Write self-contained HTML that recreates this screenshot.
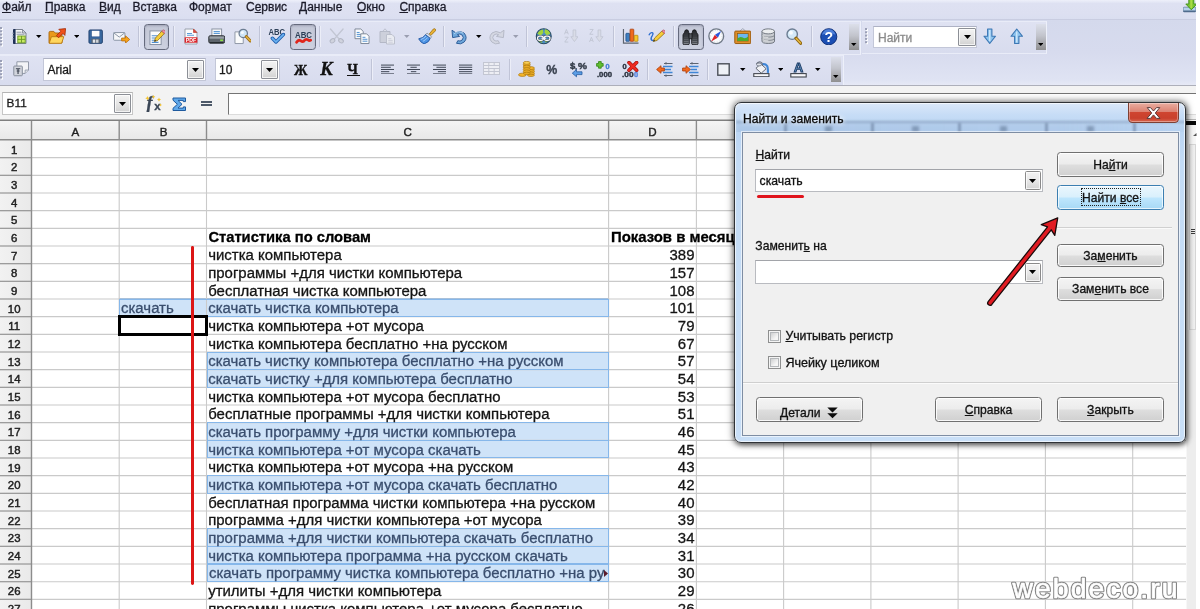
<!DOCTYPE html>
<html lang="ru"><head><meta charset="utf-8"><title>Найти и заменить</title>
<style>
html,body{margin:0;padding:0;background:#fff;}
body{width:1200px;height:609px;overflow:hidden;position:relative;font-family:"Liberation Sans", sans-serif;}
#root{position:absolute;left:0;top:0;width:1200px;height:609px;overflow:hidden;will-change:transform;filter:blur(.55px);}
.a{position:absolute;display:block;}
.t{position:absolute;white-space:nowrap;font-family:"Liberation Sans", sans-serif;-webkit-text-stroke:.3px currentColor;}
u{text-decoration:underline;text-underline-offset:1px;text-decoration-thickness:1px;}
</style></head><body><div id="root">
<div class="a" style="left:0.00px;top:0.00px;width:1196.00px;height:20.00px;background:linear-gradient(#eef0fa,#dee1f2 3.5px,#dde0f1 70%,#dadef0);"></div>
<div class="a" style="left:0.00px;top:20.00px;width:1196.00px;height:65.20px;background:linear-gradient(#d4d9ec,#d7dbee 50%,#dfe3f3 92%,#e6e9f6);"></div>
<div class="a" style="left:0.00px;top:19.30px;width:1196.00px;height:1.10px;background:#c9cde1;"></div>
<div class="a" style="left:0.00px;top:20.60px;width:860.00px;height:32.40px;background:linear-gradient(#dfe2f2,#d8dcee);border-top:1px solid #e9ecf8;border-right:1px solid #edf0fa;border-bottom:1px solid #e9ecf8;"></div>
<div class="a" style="left:861.50px;top:20.60px;width:184.70px;height:31.90px;background:linear-gradient(#dfe2f2,#d8dcee);border-top:1px solid #e9ecf8;border-right:1px solid #edf0fa;border-bottom:1px solid #e9ecf8;"></div>
<div class="a" style="left:0.00px;top:54.60px;width:842.50px;height:29.90px;background:linear-gradient(#dfe2f2,#d8dcee);border-top:1px solid #e9ecf8;border-right:1px solid #edf0fa;border-bottom:1px solid #e9ecf8;"></div>
<div class="a" style="left:0.00px;top:85.00px;width:1196.00px;height:35.00px;background:#f3f3f3;"></div>
<div class="a" style="left:0.00px;top:85.10px;width:1196.00px;height:1.40px;background:#adafba;"></div>
<div class="t" style="top:-0.66px;font-size:12px;line-height:16px;color:#1c1c2a;left:2.00px;"><u>Ф</u>айл</div>
<div class="t" style="top:-0.66px;font-size:12px;line-height:16px;color:#1c1c2a;left:45.00px;"><u>П</u>равка</div>
<div class="t" style="top:-0.66px;font-size:12px;line-height:16px;color:#1c1c2a;left:99.00px;"><u>В</u>ид</div>
<div class="t" style="top:-0.66px;font-size:12px;line-height:16px;color:#1c1c2a;left:132.40px;">Вст<u>а</u>вка</div>
<div class="t" style="top:-0.66px;font-size:12px;line-height:16px;color:#1c1c2a;left:189.00px;">Фо<u>р</u>мат</div>
<div class="t" style="top:-0.66px;font-size:12px;line-height:16px;color:#1c1c2a;left:246.00px;">С<u>е</u>рвис</div>
<div class="t" style="top:-0.66px;font-size:12px;line-height:16px;color:#1c1c2a;left:299.00px;"><u>Д</u>анные</div>
<div class="t" style="top:-0.66px;font-size:12px;line-height:16px;color:#1c1c2a;left:357.00px;"><u>О</u>кно</div>
<div class="t" style="top:-0.66px;font-size:12px;line-height:16px;color:#1c1c2a;left:399.40px;"><u>С</u>правка</div>
<svg class="a" style="left:1183.20px;top:0.00px" width="13.00" height="13.00" viewBox="0 0 13 13"><rect x=".2" y="7.200" width="12.600" height="4.700" rx="1" fill="#b5d2ea" stroke="#5c7896" stroke-width=".7"/><path d="M.4 10.600h12.200v1q0 .5-.5.500h-11.200q-.5 0-.5-.5z" fill="#4f6b8c"/><path d="M5.800-2h5v6h3l-5.500 5.800-5.500-5.800h3z" fill="#7cc62e" stroke="#3f8f18" stroke-width=".9" stroke-linejoin="round"/><path d="M7.300-2h2v9.500l-1 1-1-1z" fill="#b4e04a" opacity=".8"/></svg>
<svg class="a" style="left:0.20px;top:0" width="4" height="100"><rect x="1" y="28.0" width="2" height="2" fill="#fff"/><rect x="0" y="27.0" width="2" height="2" fill="#9ba0b6"/><rect x="1" y="31.3" width="2" height="2" fill="#fff"/><rect x="0" y="30.3" width="2" height="2" fill="#9ba0b6"/><rect x="1" y="34.6" width="2" height="2" fill="#fff"/><rect x="0" y="33.6" width="2" height="2" fill="#9ba0b6"/><rect x="1" y="37.9" width="2" height="2" fill="#fff"/><rect x="0" y="36.9" width="2" height="2" fill="#9ba0b6"/><rect x="1" y="41.2" width="2" height="2" fill="#fff"/><rect x="0" y="40.2" width="2" height="2" fill="#9ba0b6"/><rect x="1" y="44.5" width="2" height="2" fill="#fff"/><rect x="0" y="43.5" width="2" height="2" fill="#9ba0b6"/></svg>
<svg class="a" style="left:12.00px;top:28.00px" width="16.00" height="17.00" viewBox="0 0 16 17"><path d="M2.500 1.500h8l3.500 3.500v10.500h-11.500z" fill="#f6f7f9" stroke="#7a8290" stroke-width="1"/><path d="M10.500 1.500v3.500h3.500z" fill="#d5d8de" stroke="#7a8290" stroke-width=".8"/><rect x="1" y="1" width="2.600" height="15" rx=".8" fill="#1f3157"/><path d="M4.500 4.200h5M4.500 6.200h8" stroke="#8d96a4" stroke-width="1"/><rect x="5.800" y="8" width="7.400" height="6.800" fill="#c6e860" stroke="#6a9a22" stroke-width=".9"/><path d="M9.500 8v6.800M5.800 11.400h7.400" stroke="#6a9a22" stroke-width=".9"/><path d="M0 5.200h2M0 8h2M0 10.800h2" stroke="#9aa3b5" stroke-width=".8"/></svg>
<svg class="a" style="left:36.05px;top:35.00px" width="5.5" height="3" viewBox="0 0 5.5 3"><path d="M0 0H5.5L2.75 3Z" fill="#000"/></svg>
<svg class="a" style="left:48.00px;top:27.50px" width="18.00" height="17.00" viewBox="0 0 18 17"><path d="M1 4.600q0-1.200 1.200-1.200h3.600l1.400 1.600h5.800q1 0 1 1v8.900h-13z" fill="#e99a1c" stroke="#a8640c" stroke-width=".9"/><path d="M1.200 15.300l2.200-6.600h12.400l-2.200 6.600z" fill="#ffd65e" stroke="#b9780f" stroke-width=".9"/><path d="M17.600.600l-.7 6.800-2-2-4.300 4.400-2.200-2.200 4.400-4.300-2-2z" fill="#f0501a" stroke="#a02c08" stroke-width=".8" stroke-linejoin="round"/></svg>
<svg class="a" style="left:73.75px;top:35.00px" width="5.5" height="3" viewBox="0 0 5.5 3"><path d="M0 0H5.5L2.75 3Z" fill="#000"/></svg>
<svg class="a" style="left:88.00px;top:28.80px" width="15.30" height="15.30" viewBox="0 0 16 16"><path d="M1 2.2q0-1.2 1.2-1.2h11.6q1.2 0 1.2 1.2v11.6q0 1.2-1.2 1.2h-11.6q-1.200 0-1.200-1.2z" fill="#3a6aa2" stroke="#1f3f6c" stroke-width="1"/><rect x="3.6" y="1.6" width="8.8" height="6.6" fill="#fdfdfd" stroke="#27508a" stroke-width=".6"/><rect x="3.6" y="10.2" width="8.8" height="4.6" fill="#5a6472"/><rect x="5" y="11" width="2.6" height="3.400" fill="#e3e6ea"/><rect x="8.4" y="11" width="2.600" height="3.400" fill="#cfd3d9"/></svg>
<svg class="a" style="left:113.00px;top:31.60px" width="17.30" height="11.53" viewBox="0 0 18 12"><rect x=".6" y=".6" width="11.800" height="8" rx=".8" fill="#f6f7f9" stroke="#8792a3" stroke-width="1"/><path d="M.8.900l5.700 4.400 5.700-4.400" fill="none" stroke="#8792a3" stroke-width="1"/><path d="M9 6.300h4v-2.300l4.400 3.800-4.400 3.800v-2.300h-4z" fill="#f7a41d" stroke="#b76a08" stroke-width=".8"/></svg>
<div class="a" style="left:137.50px;top:26.00px;width:1.00px;height:21.00px;background:#c0c4d7;"></div>
<div class="a" style="left:138.50px;top:26.00px;width:1.00px;height:21.00px;background:#eceef8;"></div>
<div class="a" style="left:143.70px;top:24.00px;width:25.60px;height:25.80px;box-sizing:border-box;border:1.7px solid #656a7d;border-radius:3.5px;background:linear-gradient(#c3c7d6,#cdd1e0);box-shadow:inset 0 1px 2px rgba(60,60,90,.25);"></div>
<svg class="a" style="left:148.50px;top:28.50px" width="16.50" height="16.50" viewBox="0 0 17 17"><rect x="1" y="2" width="11.500" height="14" fill="#fafbfd" stroke="#8690a2" stroke-width="1"/><path d="M2.800 7h6M2.800 9.300h5M2.800 11.600h4M2.800 13.800h7" stroke="#4f8fd0" stroke-width="1.100"/><path d="M5.600 12.800l1-3.400 6.600-7.200 2.600 2.400-6.800 7.200z" fill="#f6cd3a" stroke="#8c6a12" stroke-width=".8"/><path d="M13.200 2.200l1-1q.8-.6 1.600.1l1 1q.6.800 0 1.400l-1 1z" fill="#ef8fa0" stroke="#b04a5e" stroke-width=".7"/><path d="M5.600 12.800l.5-1.700 1.300 1.200z" fill="#222"/></svg>
<div class="a" style="left:172.50px;top:26.00px;width:1.00px;height:21.00px;background:#c0c4d7;"></div>
<div class="a" style="left:173.50px;top:26.00px;width:1.00px;height:21.00px;background:#eceef8;"></div>
<svg class="a" style="left:184.00px;top:28.00px" width="14.00" height="17.00" viewBox="0 0 14 17"><path d="M1 1h8.500l3.500 3.500v11.500h-12z" fill="#fbfbfc" stroke="#9aa1ad" stroke-width="1"/><path d="M9.500 1v3.500h3.500z" fill="#e0483a" stroke="#b23226" stroke-width=".6"/><path d="M3 5.500h5M3 7.300h7" stroke="#5d9ad6" stroke-width="1.100"/><rect x=".6" y="9.300" width="12.800" height="5.400" fill="#d9252c"/><text x="7" y="13.900" font-size="5.200" font-weight="bold" text-anchor="middle" fill="#fff" font-family="Liberation Sans, sans-serif">PDF</text></svg>
<svg class="a" style="left:207.50px;top:28.00px" width="17.50" height="16.53" viewBox="0 0 18 17"><rect x="4" y="1" width="10" height="7.500" fill="#f7f8fa" stroke="#8a93a2" stroke-width="1"/><path d="M5.800 3.600h6.400M5.800 5.600h6.400" stroke="#5d9ad6" stroke-width="1.200"/><rect x=".8" y="8" width="16.400" height="7.500" rx="1.400" fill="#5d646c" stroke="#2e3338" stroke-width="1"/><rect x="1.600" y="8.700" width="14.800" height="2.300" fill="#9aa1a8"/><rect x="12.500" y="11.800" width="3" height="1.700" fill="#8de04a"/><path d="M2 15.200h14" stroke="#23272b" stroke-width="1.400"/></svg>
<svg class="a" style="left:233.70px;top:28.00px" width="17.50" height="16.53" viewBox="0 0 18 17"><path d="M1 4h8.500v12h-8.500z" fill="#fafbfc" stroke="#8e97a5" stroke-width="1"/><circle cx="9.500" cy="5.600" r="4.300" fill="#cfe6f7" stroke="#6c7d92" stroke-width="1.300"/><circle cx="8.600" cy="4.600" r="1.600" fill="#fff" opacity=".8"/><path d="M12.600 8.800l4.200 4.600" stroke="#9a6a12" stroke-width="3" stroke-linecap="round"/><path d="M12.800 9l3.900 4.200" stroke="#e2b23c" stroke-width="1.500" stroke-linecap="round"/></svg>
<div class="a" style="left:258.50px;top:26.00px;width:1.00px;height:21.00px;background:#c0c4d7;"></div>
<div class="a" style="left:259.50px;top:26.00px;width:1.00px;height:21.00px;background:#eceef8;"></div>
<svg class="a" style="left:268.00px;top:27.50px" width="17.50" height="16.53" viewBox="0 0 18 17"><text x="9" y="7" font-size="8.800" font-weight="bold" text-anchor="middle" fill="#2c3f57" font-family="Liberation Sans, sans-serif" textLength="17" lengthAdjust="spacingAndGlyphs">ABC</text><path d="M4.500 10.600l3.700 3.800 7.600-7.600" fill="none" stroke="#1f5fae" stroke-width="3.600" stroke-linecap="round" stroke-linejoin="round"/><path d="M4.500 10.600l3.700 3.800 7.600-7.600" fill="none" stroke="#6db3f2" stroke-width="1.800" stroke-linecap="round" stroke-linejoin="round"/></svg>
<div class="a" style="left:290.00px;top:24.00px;width:26.00px;height:25.80px;box-sizing:border-box;border:1.7px solid #656a7d;border-radius:3.5px;background:linear-gradient(#c3c7d6,#cdd1e0);box-shadow:inset 0 1px 2px rgba(60,60,90,.25);"></div>
<svg class="a" style="left:294.50px;top:28.50px" width="17.00" height="16.00" viewBox="0 0 17 16"><text x="8.500" y="8.600" font-size="9" font-weight="bold" text-anchor="middle" fill="#2c3f57" font-family="Liberation Sans, sans-serif" textLength="17" lengthAdjust="spacingAndGlyphs">ABC</text><path d="M1.600 13.200q1.800-2.800 3.800-1.600 3 2.200 3.800 0 1.600-2 3.600-.8 1.600 1.400 2.800.4" fill="none" stroke="#e0261c" stroke-width="2.800" stroke-linecap="round"/></svg>
<div class="a" style="left:319.20px;top:26.00px;width:1.00px;height:21.00px;background:#c0c4d7;"></div>
<div class="a" style="left:320.20px;top:26.00px;width:1.00px;height:21.00px;background:#eceef8;"></div>
<svg class="a" style="left:327.50px;top:28.00px" width="17.50" height="16.53" viewBox="0 0 18 17"><path d="M2.500 1l9.500 11M15.500 1l-9.500 11" stroke="#c2c6d3" stroke-width="1.400" stroke-linecap="round"/><ellipse cx="4.600" cy="13.200" rx="2.600" ry="2" fill="#d0d3de" stroke="#b3b7c5" stroke-width="1" transform="rotate(-35 4.600 13.200)"/><ellipse cx="13.400" cy="13.200" rx="2.600" ry="2" fill="#d0d3de" stroke="#b3b7c5" stroke-width="1" transform="rotate(35 13.400 13.200)"/></svg>
<svg class="a" style="left:354.00px;top:28.00px" width="16.50" height="16.50" viewBox="0 0 17 17"><path d="M1 1h6l2.500 2.500v7.500h-8.500z" fill="#fbfcfd" stroke="#7d8797" stroke-width="1"/><path d="M2.800 4.600h3M2.800 6.600h5M2.800 8.600h5" stroke="#4f8fd0" stroke-width="1"/><path d="M7 6h6l2.500 2.500v7.500h-8.500z" fill="#fbfcfd" stroke="#7d8797" stroke-width="1"/><path d="M8.800 9.600h3M8.800 11.600h5M8.800 13.600h5" stroke="#4f8fd0" stroke-width="1"/></svg>
<svg class="a" style="left:379.00px;top:28.00px" width="17.00" height="17.00" viewBox="0 0 17 17"><path d="M1 3.500h10v11h-10z" fill="#cdd0db" stroke="#b4b8c6" stroke-width="1"/><path d="M3.500 3.500l2.500-2.700 2.500 2.700z" fill="#dcdfe8" stroke="#b4b8c6" stroke-width=".8"/><path d="M7.500 6.500h5.500l2.500 2.500v7h-8z" fill="#e9ebf1" stroke="#bcc0cc" stroke-width="1"/><path d="M9.300 10.600h3M9.300 12.400h4.400M9.300 14.200h4.400" stroke="#c9ccd8" stroke-width=".9"/></svg>
<svg class="a" style="left:404.25px;top:35.00px" width="5.5" height="3" viewBox="0 0 5.5 3"><path d="M0 0H5.5L2.75 3Z" fill="#9a9eb0"/></svg>
<svg class="a" style="left:417.50px;top:27.50px" width="18.50" height="16.55" viewBox="0 0 19 17"><path d="M11.500 6.200l4.300-5.200q1.200-.8 2 .2t0 1.800l-4.600 4.700z" fill="#e9b234" stroke="#9a6d10" stroke-width=".8"/><path d="M9.300 5.200l4.700 3.800-1.500 1.700-4.700-3.800z" fill="#dfe3ea" stroke="#7c8696" stroke-width=".8"/><path d="M7.800 6.900l4.700 3.800q-.8 3.800-6.300 5.700-3.800-1.700-5.500-5.300 4.600-.6 7.100-4.200z" fill="#4d93e3" stroke="#1e55a4" stroke-width=".9"/><path d="M3 11.800q3-1 5.300-3.600M5 13.700q3-1.400 5-4" stroke="#a8d0fa" stroke-width=".9" fill="none"/></svg>
<div class="a" style="left:442.50px;top:26.00px;width:1.00px;height:21.00px;background:#c0c4d7;"></div>
<div class="a" style="left:443.50px;top:26.00px;width:1.00px;height:21.00px;background:#eceef8;"></div>
<svg class="a" style="left:451.00px;top:28.50px" width="17.00" height="16.00" viewBox="0 0 17 16"><path d="M1 1.200l.6 7.400 7-1.200-2.300-1.700q2.600-1.600 4.800.3 2.400 2.500 0 5.100-1.900 1.600-4.300.6l-1.300 2.600q4.300 1.700 7.700-1.300 3.900-4.400-.2-9-3.800-3-8.300-.2z" fill="#6fa8dc" stroke="#2f5f9a" stroke-width="1" stroke-linejoin="round"/><path d="M3.200 4.700q4.600-3.600 9.200-.4" stroke="#b9dbf7" stroke-width="1" fill="none"/></svg>
<svg class="a" style="left:476.05px;top:35.00px" width="5.5" height="3" viewBox="0 0 5.5 3"><path d="M0 0H5.5L2.75 3Z" fill="#000"/></svg>
<svg class="a" style="left:488.00px;top:28.50px" width="17.00" height="16.00" viewBox="0 0 17 16"><g transform="translate(17 0) scale(-1 1)"><path d="M1 1.200l.6 7.400 7-1.200-2.300-1.700q2.600-1.600 4.800.3 2.400 2.500 0 5.100-1.900 1.600-4.300.6l-1.300 2.600q4.300 1.700 7.700-1.300 3.900-4.400-.2-9-3.800-3-8.300-.2z" fill="#d4d7e2" stroke="#b6bac8" stroke-width="1" stroke-linejoin="round"/></g></svg>
<svg class="a" style="left:513.25px;top:35.00px" width="5.5" height="3" viewBox="0 0 5.5 3"><path d="M0 0H5.5L2.75 3Z" fill="#9a9eb0"/></svg>
<div class="a" style="left:525.50px;top:26.00px;width:1.00px;height:21.00px;background:#c0c4d7;"></div>
<div class="a" style="left:526.50px;top:26.00px;width:1.00px;height:21.00px;background:#eceef8;"></div>
<svg class="a" style="left:535.00px;top:28.00px" width="17.50" height="16.53" viewBox="0 0 18 17"><circle cx="9" cy="8.500" r="7.700" fill="#4a8ec6" stroke="#274a66" stroke-width="1.100"/><path d="M2.400 6q1.800-3.800 5.800-4.400l.4 3.600-2.800 2.400zM10.200 1.400q3.800.6 5.600 4.400l-3.600 1.600-2.400-2.600zM2.600 12.600l3-1.400 2.200 4q-3.400-.4-5.200-2.600zM10.600 12l4.600-.6q-1.400 3-4.600 3.800z" fill="#a2d43c"/><rect x="2.600" y="8.300" width="6" height="4.400" rx="2.200" fill="none" stroke="#3c4652" stroke-width="2.300"/><rect x="9.400" y="8.300" width="6" height="4.400" rx="2.200" fill="none" stroke="#3c4652" stroke-width="2.300"/><path d="M6.500 10.500h5" stroke="#3c4652" stroke-width="2.300"/><rect x="2.600" y="8.300" width="6" height="4.400" rx="2.200" fill="none" stroke="#f6f8fa" stroke-width="1.300"/><rect x="9.400" y="8.300" width="6" height="4.400" rx="2.200" fill="none" stroke="#f6f8fa" stroke-width="1.300"/><path d="M6.500 10.500h5" stroke="#f6f8fa" stroke-width="1.300"/></svg>
<svg class="a" style="left:562.50px;top:28.00px" width="15.50" height="16.47" viewBox="0 0 16 17"><path d="M10.400 2h2.800v7h2.300l-3.700 5-3.700-5h2.300z" fill="#d9dce7" stroke="#c0c4d2" stroke-width=".8"/><path d="M1.500 6.500l2-5 2 5M2.300 4.800h2.400" fill="none" stroke="#c0c4d2" stroke-width=".9"/><path d="M1.800 9.500h3.600l-3.600 5h3.600" fill="none" stroke="#c0c4d2" stroke-width=".9"/></svg>
<svg class="a" style="left:588.00px;top:28.00px" width="15.50" height="16.47" viewBox="0 0 16 17"><path d="M10.400 2h2.800v7h2.300l-3.700 5-3.700-5h2.300z" fill="#d9dce7" stroke="#c0c4d2" stroke-width=".8"/><path d="M1.800 1.500h3.600l-3.600 5h3.600" fill="none" stroke="#c0c4d2" stroke-width=".9"/><path d="M1.500 14.500l2-5 2 5M2.300 12.800h2.400" fill="none" stroke="#c0c4d2" stroke-width=".9"/></svg>
<div class="a" style="left:612.50px;top:26.00px;width:1.00px;height:21.00px;background:#c0c4d7;"></div>
<div class="a" style="left:613.50px;top:26.00px;width:1.00px;height:21.00px;background:#eceef8;"></div>
<svg class="a" style="left:621.70px;top:27.50px" width="17.50" height="16.53" viewBox="0 0 18 17"><path d="M1.500 1v14.500h15.500" fill="none" stroke="#5e6570" stroke-width="1.200"/><rect x="4" y="5.500" width="3.800" height="8.200" rx=".6" fill="#3f7fc0" stroke="#1f4f86" stroke-width=".8"/><rect x="8.300" y="1.200" width="3.800" height="12.500" rx=".6" fill="#f06a1e" stroke="#a83c0a" stroke-width=".8"/><rect x="12.600" y="7.500" width="3.800" height="6.200" rx=".6" fill="#f7c62c" stroke="#b3860c" stroke-width=".8"/></svg>
<svg class="a" style="left:647.50px;top:29.00px" width="17.50" height="14.58" viewBox="0 0 18 15"><path d="M1.200 6q1-2.600 3-2.300 1.800.5.200 3-2.200 3.200-.6 4.800 1.600.9 3-.5" fill="none" stroke="#2f6fd0" stroke-width="1.400" stroke-linecap="round"/><path d="M5.500 12.800l1.300-3.500 7.500-7.200 2.500 2.500-7.600 7.200z" fill="#f6cd3a" stroke="#8c6a12" stroke-width=".8"/><path d="M14.300 2.100l1-.9q.9-.5 1.600.2l.8.900q.5.800-.1 1.500l-.9.900z" fill="#ef8fa0" stroke="#b04a5e" stroke-width=".7"/><path d="M5.500 12.800l.6-1.700 1.200 1.200z" fill="#222"/></svg>
<div class="a" style="left:672.50px;top:26.00px;width:1.00px;height:21.00px;background:#c0c4d7;"></div>
<div class="a" style="left:673.50px;top:26.00px;width:1.00px;height:21.00px;background:#eceef8;"></div>
<div class="a" style="left:678.00px;top:24.00px;width:25.70px;height:25.80px;box-sizing:border-box;border:1.7px solid #656a7d;border-radius:3.5px;background:linear-gradient(#c3c7d6,#cdd1e0);box-shadow:inset 0 1px 2px rgba(60,60,90,.25);"></div>
<svg class="a" style="left:682.30px;top:28.50px" width="17.00" height="16.00" viewBox="0 0 17 16"><defs><linearGradient id="bn" x1="0" y1="0" x2="0" y2="1"><stop offset="0" stop-color="#26282c"/><stop offset=".45" stop-color="#3a3d42"/><stop offset="1" stop-color="#8a8e94"/></linearGradient></defs><path d="M2.600 3.200q0-2.400 2-2.400t2 2.400l.7 1.600v9.700q0 1.200-1.200 1.200h-3.900q-1.200 0-1.200-1.200v-8.700z" fill="url(#bn)" stroke="#17191c" stroke-width=".9"/><path d="M14.400 3.200q0-2.400-2-2.400t-2 2.400l-.7 1.600v9.700q0 1.200 1.200 1.200h3.900q1.200 0 1.200-1.200v-8.700z" fill="url(#bn)" stroke="#17191c" stroke-width=".9"/><rect x="7" y="4.800" width="3" height="5" fill="#55595f" stroke="#17191c" stroke-width=".8"/><path d="M1.600 9.500h5M1.600 11.500h5M1.600 13.500h5M10.400 9.500h5M10.400 11.500h5M10.400 13.500h5" stroke="#3a3d42" stroke-width=".7"/></svg>
<svg class="a" style="left:708.00px;top:28.00px" width="16.50" height="16.50" viewBox="0 0 17 17"><circle cx="8.500" cy="8.500" r="7.600" fill="#fafbfc" stroke="#6f7987" stroke-width="1.400"/><circle cx="8.500" cy="8.500" r="6" fill="none" stroke="#c3c9d2" stroke-width=".8" stroke-dasharray="1 1.600"/><path d="M13.600 3.200l-3.400 6.800-3-3z" fill="#2b56d8"/><path d="M3.200 13.800l3.800-6.800 3 3z" fill="#e0242a"/></svg>
<svg class="a" style="left:733.70px;top:28.00px" width="17.50" height="16.53" viewBox="0 0 18 17"><path d="M6 3.200l3-2.600 3 2.600" fill="none" stroke="#9aa0ab" stroke-width=".9"/><rect x=".8" y="3.200" width="16.400" height="12.800" rx=".8" fill="#e0902a" stroke="#9a5a0c" stroke-width="1"/><rect x="3.400" y="5.800" width="11.200" height="7.600" fill="#6ab8f0" stroke="#8c560c" stroke-width=".7"/><path d="M3.400 13.400v-2.500q3-2.600 5.600-1t5.600-1.200v4.700z" fill="#4eaa2c"/></svg>
<svg class="a" style="left:761.00px;top:28.00px" width="14.50" height="16.43" viewBox="0 0 15 17"><path d="M1 3.500v10q0 2.500 6.500 2.500t6.500-2.500v-10z" fill="#c9ccd1" stroke="#6f757e" stroke-width="1"/><ellipse cx="7.500" cy="3.500" rx="6.500" ry="2.600" fill="#eceef0" stroke="#6f757e" stroke-width="1"/><path d="M1 7q0 2.400 6.500 2.400t6.500-2.400M1 10.400q0 2.400 6.500 2.400t6.500-2.400" fill="none" stroke="#7a8088" stroke-width=".9"/><path d="M1.600 7.600q0 2.200 5.900 2.200M1.600 11q0 2.200 5.900 2.200" fill="none" stroke="#f3f4f5" stroke-width=".7"/></svg>
<svg class="a" style="left:786.00px;top:28.00px" width="16.00" height="17.00" viewBox="0 0 16 17"><circle cx="6.200" cy="6.200" r="5.200" fill="#d4e9f8" stroke="#6c7d92" stroke-width="1.400"/><circle cx="5" cy="4.800" r="2" fill="#fff" opacity=".8"/><path d="M10 10.200l4.600 5" stroke="#8d6410" stroke-width="3.200" stroke-linecap="round"/><path d="M10.300 10.500l4.200 4.500" stroke="#e6b83e" stroke-width="1.600" stroke-linecap="round"/></svg>
<div class="a" style="left:810.50px;top:26.00px;width:1.00px;height:21.00px;background:#c0c4d7;"></div>
<div class="a" style="left:811.50px;top:26.00px;width:1.00px;height:21.00px;background:#eceef8;"></div>
<svg class="a" style="left:820.00px;top:27.50px" width="17.50" height="17.50" viewBox="0 0 18 18"><circle cx="9" cy="9" r="8.300" fill="#1c4fb4" stroke="#0f2f78" stroke-width="1"/><path d="M2 7q2-5.600 7-5.600t7 5.600q-7-2.600-14 0z" fill="#5f8fe6" opacity=".75"/><text x="9" y="14.200" font-size="14.500" font-weight="bold" text-anchor="middle" fill="#fff" font-family="Liberation Sans, sans-serif">?</text></svg>
<div class="a" style="left:848.70px;top:24.20px;width:10.30px;height:25.80px;background:linear-gradient(#dcdfea,#c2c4cc 45%,#8f8f90);"></div>
<svg class="a" style="left:851.10px;top:43.00px" width="5.5" height="3" viewBox="0 0 5.5 3"><path d="M0 0H5.5L2.75 3Z" fill="#000"/></svg>
<svg class="a" style="left:865.00px;top:0" width="4" height="100"><rect x="1" y="29.0" width="2" height="2" fill="#fff"/><rect x="0" y="28.0" width="2" height="2" fill="#9ba0b6"/><rect x="1" y="32.3" width="2" height="2" fill="#fff"/><rect x="0" y="31.3" width="2" height="2" fill="#9ba0b6"/><rect x="1" y="35.6" width="2" height="2" fill="#fff"/><rect x="0" y="34.6" width="2" height="2" fill="#9ba0b6"/><rect x="1" y="38.9" width="2" height="2" fill="#fff"/><rect x="0" y="37.9" width="2" height="2" fill="#9ba0b6"/><rect x="1" y="42.2" width="2" height="2" fill="#fff"/><rect x="0" y="41.2" width="2" height="2" fill="#9ba0b6"/></svg>
<div class="a" style="left:873.30px;top:25.60px;width:104.20px;height:22.70px;box-sizing:border-box;background:#fff;border:1px solid #c3c7d8;border-top-color:#aeb2c4;"></div>
<div class="a" style="left:958.10px;top:27.60px;width:17.90px;height:18.70px;box-sizing:border-box;border:1px solid #8c8f96;border-radius:1px;background:linear-gradient(#f3f3f3,#e6e6e6 50%,#d2d2d2);box-shadow:inset 0 0 0 1px rgba(255,255,255,.7);"></div>
<svg class="a" style="left:963.55px;top:35.25px" width="7" height="4" viewBox="0 0 7 4"><path d="M0 0H7L3.5 4Z" fill="#000"/></svg>
<div class="t" style="top:29.54px;font-size:12px;line-height:16px;color:#8b8b8b;left:878.00px;">Найти</div>
<svg class="a" style="left:983.00px;top:27.50px" width="13.50" height="16.50" viewBox="0 0 13.5 16.5"><path d="M4.600 1h4.300v7.200h3.600l-5.750 7.300-5.750-7.300h3.600z" fill="#8ec4ee" stroke="#3d78b4" stroke-width="1.100" stroke-linejoin="round"/><path d="M6.750 2v11" stroke="#d5ebfb" stroke-width="1.200"/></svg>
<svg class="a" style="left:1009.50px;top:27.50px" width="13.50" height="16.50" viewBox="0 0 13.5 16.5"><g transform="translate(0 16.500) scale(1 -1)"><path d="M4.600 1h4.300v7.200h3.600l-5.750 7.300-5.750-7.300h3.600z" fill="#8ec4ee" stroke="#3d78b4" stroke-width="1.100" stroke-linejoin="round"/><path d="M6.750 2v11" stroke="#d5ebfb" stroke-width="1.200"/></g></svg>
<div class="a" style="left:1035.50px;top:24.20px;width:10.00px;height:25.80px;background:linear-gradient(#dcdfea,#c2c4cc 45%,#8f8f90);"></div>
<svg class="a" style="left:1037.75px;top:43.00px" width="5.5" height="3" viewBox="0 0 5.5 3"><path d="M0 0H5.5L2.75 3Z" fill="#000"/></svg>
<svg class="a" style="left:0.20px;top:0" width="4" height="100"><rect x="1" y="61.0" width="2" height="2" fill="#fff"/><rect x="0" y="60.0" width="2" height="2" fill="#9ba0b6"/><rect x="1" y="64.3" width="2" height="2" fill="#fff"/><rect x="0" y="63.3" width="2" height="2" fill="#9ba0b6"/><rect x="1" y="67.6" width="2" height="2" fill="#fff"/><rect x="0" y="66.6" width="2" height="2" fill="#9ba0b6"/><rect x="1" y="70.9" width="2" height="2" fill="#fff"/><rect x="0" y="69.9" width="2" height="2" fill="#9ba0b6"/><rect x="1" y="74.2" width="2" height="2" fill="#fff"/><rect x="0" y="73.2" width="2" height="2" fill="#9ba0b6"/><rect x="1" y="77.5" width="2" height="2" fill="#fff"/><rect x="0" y="76.5" width="2" height="2" fill="#9ba0b6"/></svg>
<svg class="a" style="left:12.50px;top:61.00px" width="16.50" height="15.53" viewBox="0 0 17 16"><path d="M4 .800h12v8.500l-3.500 3.500h-8.500z" fill="#f3f4f7" stroke="#9097a6" stroke-width="1"/><path d="M16 9.300h-3.500v3.500" fill="#dcdfe6" stroke="#9097a6" stroke-width=".8"/><rect x=".8" y="5.200" width="8.800" height="10" rx=".8" fill="#d1d4dc" stroke="#858c9a" stroke-width="1"/><path d="M3 8h4.500M5.200 8v5.500M3.800 10.300h3" stroke="#3c4350" stroke-width="1.200" fill="none"/></svg>
<div class="a" style="left:43.00px;top:58.00px;width:163.00px;height:23.30px;box-sizing:border-box;background:#fff;border:1px solid #c3c7d8;border-top-color:#aeb2c4;"></div>
<div class="a" style="left:187.30px;top:60.00px;width:17.20px;height:19.30px;box-sizing:border-box;border:1px solid #8c8f96;border-radius:1px;background:linear-gradient(#f3f3f3,#e6e6e6 50%,#d2d2d2);box-shadow:inset 0 0 0 1px rgba(255,255,255,.7);"></div>
<svg class="a" style="left:192.40px;top:67.95px" width="7" height="4" viewBox="0 0 7 4"><path d="M0 0H7L3.5 4Z" fill="#000"/></svg>
<div class="t" style="top:61.54px;font-size:12px;line-height:16px;color:#1a1a1a;left:47.50px;">Arial</div>
<div class="a" style="left:215.00px;top:58.00px;width:65.00px;height:23.30px;box-sizing:border-box;background:#fff;border:1px solid #c3c7d8;border-top-color:#aeb2c4;"></div>
<div class="a" style="left:261.30px;top:60.00px;width:17.20px;height:19.30px;box-sizing:border-box;border:1px solid #8c8f96;border-radius:1px;background:linear-gradient(#f3f3f3,#e6e6e6 50%,#d2d2d2);box-shadow:inset 0 0 0 1px rgba(255,255,255,.7);"></div>
<svg class="a" style="left:266.40px;top:67.95px" width="7" height="4" viewBox="0 0 7 4"><path d="M0 0H7L3.5 4Z" fill="#000"/></svg>
<div class="t" style="top:61.54px;font-size:12px;line-height:16px;color:#1a1a1a;left:219.00px;">10</div>
<div class="t" style="left:294.3px;top:60.6px;font:bold 14.6px 'Liberation Serif',serif;line-height:18px;color:#111;transform-origin:0 0;transform:scaleX(.93)">Ж</div>
<div class="t" style="left:320.3px;top:58.6px;font:italic bold 18.5px 'Liberation Serif',serif;line-height:21px;color:#111">К</div>
<div class="t" style="left:347.3px;top:59.8px;font:bold 14.6px 'Liberation Serif',serif;line-height:18px;color:#111;">Ч</div>
<div class="a" style="left:346.80px;top:74.60px;width:13.00px;height:1.30px;background:#111;"></div>
<div class="a" style="left:370.50px;top:59.00px;width:1.00px;height:21.00px;background:#c0c4d7;"></div>
<div class="a" style="left:371.50px;top:59.00px;width:1.00px;height:21.00px;background:#eceef8;"></div>
<svg class="a" style="left:381.20px;top:64.20px" width="13.20" height="10.27" viewBox="0 0 13.5 10.5"><rect x="0" y="0.60" width="13.5" height="1" fill="#3c4452"/><rect x="0" y="2.85" width="10" height="1" fill="#3c4452"/><rect x="0" y="5.10" width="13.5" height="1" fill="#3c4452"/><rect x="0" y="7.35" width="8.5" height="1" fill="#3c4452"/><rect x="0" y="9.60" width="13.5" height="1" fill="#3c4452"/></svg>
<svg class="a" style="left:407.20px;top:64.20px" width="13.20" height="10.27" viewBox="0 0 13.5 10.5"><rect x="0" y="0.60" width="13.5" height="1" fill="#3c4452"/><rect x="3.5" y="2.85" width="6.5" height="1" fill="#3c4452"/><rect x="0" y="5.10" width="13.5" height="1" fill="#3c4452"/><rect x="4" y="7.35" width="5.5" height="1" fill="#3c4452"/><rect x="0" y="9.60" width="13.5" height="1" fill="#3c4452"/></svg>
<svg class="a" style="left:433.30px;top:64.20px" width="13.20" height="10.27" viewBox="0 0 13.5 10.5"><rect x="0" y="0.60" width="13.5" height="1" fill="#3c4452"/><rect x="3.5" y="2.85" width="10.0" height="1" fill="#3c4452"/><rect x="0" y="5.10" width="13.5" height="1" fill="#3c4452"/><rect x="5" y="7.35" width="8.5" height="1" fill="#3c4452"/><rect x="0" y="9.60" width="13.5" height="1" fill="#3c4452"/></svg>
<svg class="a" style="left:459.40px;top:64.20px" width="13.20" height="10.27" viewBox="0 0 13.5 10.5"><rect x="0" y="0.60" width="13.5" height="1" fill="#3c4452"/><rect x="0" y="2.85" width="13.5" height="1" fill="#3c4452"/><rect x="0" y="5.10" width="13.5" height="1" fill="#3c4452"/><rect x="0" y="7.35" width="13.5" height="1" fill="#3c4452"/><rect x="0" y="9.60" width="13.5" height="1" fill="#3c4452"/></svg>
<svg class="a" style="left:483.00px;top:62.00px" width="17.00" height="13.00" viewBox="0 0 17 13"><rect x=".5" y=".5" width="16" height="12" fill="#edeef4" stroke="#c3c6d2" stroke-width="1"/><path d="M.5 3.500h16M.5 6.500h16M.5 9.500h16M5.800.5v12M11.200.5v12" stroke="#c3c6d2" stroke-width="1"/><rect x="6.300" y="4" width="9.700" height="2" fill="#edeef4"/></svg>
<div class="a" style="left:508.50px;top:59.00px;width:1.00px;height:21.00px;background:#c0c4d7;"></div>
<div class="a" style="left:509.50px;top:59.00px;width:1.00px;height:21.00px;background:#eceef8;"></div>
<svg class="a" style="left:517.50px;top:60.50px" width="17.50" height="16.53" viewBox="0 0 18 17"><g stroke="#a8740c" stroke-width=".7" fill="#f5b52a"><ellipse cx="4.500" cy="14.200" rx="4" ry="1.700"/><ellipse cx="13.300" cy="14.500" rx="3.600" ry="1.500"/><ellipse cx="13.300" cy="12.700" rx="3.600" ry="1.500"/><ellipse cx="13.300" cy="10.900" rx="3.600" ry="1.500"/><ellipse cx="13.300" cy="9.100" rx="3.600" ry="1.500"/><ellipse cx="13.300" cy="7.300" rx="3.600" ry="1.500"/><ellipse cx="9" cy="12.400" rx="3.600" ry="1.500"/><ellipse cx="9" cy="10.600" rx="3.600" ry="1.500"/><ellipse cx="9" cy="8.800" rx="3.600" ry="1.500"/><ellipse cx="9" cy="7" rx="3.600" ry="1.500"/><ellipse cx="9" cy="5.200" rx="3.600" ry="1.500"/><ellipse cx="9" cy="3.400" rx="3.600" ry="1.500"/><ellipse cx="9" cy="1.900" rx="3.600" ry="1.500" fill="#fbd157"/></g></svg>
<svg class="a" style="left:546.00px;top:63.60px" width="11.50" height="11.50" viewBox="0 0 12 12"><text x="6" y="10.400" font-size="12.600" font-weight="bold" text-anchor="middle" fill="#3a4250" stroke="#3a4250" stroke-width=".35" font-family="Liberation Sans, sans-serif" textLength="11.500" lengthAdjust="spacingAndGlyphs">%</text></svg>
<svg class="a" style="left:569.70px;top:60.50px" width="17.00" height="17.00" viewBox="0 0 17 17"><g stroke="#2f3744" stroke-width=".4"><text x="0" y="8" font-size="9.500" font-weight="bold" fill="#2f3744" font-family="Liberation Sans, sans-serif">$</text><text x="5.200" y="8" font-size="6" font-weight="bold" fill="#2f3744" font-family="Liberation Sans, sans-serif">,</text><text x="8" y="8" font-size="9.500" font-weight="bold" fill="#2f3744" font-family="Liberation Sans, sans-serif" textLength="9" lengthAdjust="spacingAndGlyphs">%</text></g><path d="M2.300 12.200l4.200-3.600v2.200h5.500v2.800h-5.500v2.200z" fill="#5b9ee6" stroke="#245a9e" stroke-width=".8" stroke-linejoin="round"/></svg>
<svg class="a" style="left:596.00px;top:61.00px" width="16.50" height="16.50" viewBox="0 0 17 17"><path d="M2.600.600h2.800v2h2v2.800h-2v2h-2.800v-2h-2v-2.800h2z" fill="#62c030" stroke="#2f7f12" stroke-width=".8"/><text x="9.800" y="8.200" font-size="7.500" font-weight="bold" fill="#4a7fd8" stroke="#4a7fd8" stroke-width=".4" font-family="Liberation Sans, sans-serif">0</text><text x="1" y="16" font-size="7.500" font-weight="bold" fill="#2f3744" stroke="#2f3744" stroke-width=".4" font-family="Liberation Sans, sans-serif" textLength="15.500" lengthAdjust="spacingAndGlyphs">.000</text></svg>
<svg class="a" style="left:622.00px;top:61.00px" width="17.00" height="17.00" viewBox="0 0 17 17"><g stroke-width=".4"><text x=".500" y="7.800" font-size="7.500" font-weight="bold" fill="#2f3744" stroke="#2f3744" font-family="Liberation Sans, sans-serif">0</text><text x="0" y="16" font-size="7.500" font-weight="bold" fill="#2f3744" stroke="#2f3744" font-family="Liberation Sans, sans-serif" textLength="11.500" lengthAdjust="spacingAndGlyphs">.00</text><text x="12" y="16" font-size="7.500" font-weight="bold" fill="#5a86dc" stroke="#5a86dc" font-family="Liberation Sans, sans-serif">0</text></g><path d="M7 1.600l7.600 7.600M14.600 1.600l-7.600 7.600" stroke="#a3120e" stroke-width="3.600" stroke-linecap="round"/><path d="M7 1.600l7.600 7.600M14.600 1.600l-7.600 7.600" stroke="#ee2a22" stroke-width="2.300" stroke-linecap="round"/></svg>
<div class="a" style="left:646.50px;top:59.00px;width:1.00px;height:21.00px;background:#c0c4d7;"></div>
<div class="a" style="left:647.50px;top:59.00px;width:1.00px;height:21.00px;background:#eceef8;"></div>
<svg class="a" style="left:656.00px;top:62.00px" width="17.00" height="15.00" viewBox="0 0 17 15"><path d="M8 1.500h8.500M8 13.500h8.500" stroke="#5d6572" stroke-width="1.100"/><path d="M7 4.500h9.500M8.500 7.500h6.500M7 10.500h9.500" stroke="#3f86d6" stroke-width="1.500"/><path d="M10 0v2.500M10 12.500v2.500" stroke="#5d6572" stroke-width=".9"/><path d="M.600 7.500l4.400-3.800v2.300h3.400v3h-3.400v2.300z" fill="#f2681c" stroke="#a83c0a" stroke-width=".8" stroke-linejoin="round"/></svg>
<svg class="a" style="left:681.70px;top:62.00px" width="17.00" height="15.00" viewBox="0 0 17 15"><path d="M8 1.500h8.500M8 13.500h8.500" stroke="#5d6572" stroke-width="1.100"/><path d="M7 4.500h9.500M8.500 7.500h6.500M7 10.500h9.500" stroke="#3f86d6" stroke-width="1.500"/><path d="M10 0v2.500M10 12.500v2.500" stroke="#5d6572" stroke-width=".9"/><path d="M8.400 7.500l-4.400-3.800v2.300h-3.400v3h3.400v2.300z" fill="#f2681c" stroke="#a83c0a" stroke-width=".8" stroke-linejoin="round"/></svg>
<div class="a" style="left:707.00px;top:59.00px;width:1.00px;height:21.00px;background:#c0c4d7;"></div>
<div class="a" style="left:708.00px;top:59.00px;width:1.00px;height:21.00px;background:#eceef8;"></div>
<svg class="a" style="left:717.00px;top:63.00px" width="13.00" height="13.00" viewBox="0 0 13 13"><rect x=".800" y=".800" width="11.400" height="11.400" fill="#eef1f6" stroke="#4a4f58" stroke-width="1.400"/></svg>
<svg class="a" style="left:740.25px;top:68.00px" width="5.5" height="3" viewBox="0 0 5.5 3"><path d="M0 0H5.5L2.75 3Z" fill="#000"/></svg>
<svg class="a" style="left:752.50px;top:60.50px" width="17.50" height="16.53" viewBox="0 0 18 17"><path d="M8.500 3.800q3.800-1.600 6 1.200 1.200 2 .8 7.200" fill="none" stroke="#3f86d6" stroke-width="2.200"/><path d="M3 7.500l5-4.500 5.500 5-5 4.500z" fill="#f2f3f6" stroke="#5d6470" stroke-width="1"/><path d="M3.400 3.200q1.600-2.800 4.400-2.200 2.200.8 1.600 3.200" fill="none" stroke="#6b7280" stroke-width="1.100"/><ellipse cx="6.200" cy="3.600" rx="2.600" ry="1.500" fill="#dfe2e8" stroke="#6b7280" stroke-width=".8"/><rect x=".800" y="13" width="15.600" height="3.200" fill="#f7f7fa" stroke="#3f444c" stroke-width="1.100"/></svg>
<svg class="a" style="left:777.55px;top:68.00px" width="5.5" height="3" viewBox="0 0 5.5 3"><path d="M0 0H5.5L2.75 3Z" fill="#000"/></svg>
<svg class="a" style="left:790.00px;top:61.00px" width="17.00" height="17.00" viewBox="0 0 17 17"><text x="8.500" y="10.800" font-size="13.200" font-weight="bold" text-anchor="middle" fill="#6a98c6" stroke="#1f3f68" stroke-width=".9" font-family="Liberation Sans, sans-serif">A</text><rect x=".800" y="12.600" width="15.400" height="3.400" fill="#f7f7fa" stroke="#3f444c" stroke-width="1.100"/></svg>
<svg class="a" style="left:815.25px;top:68.00px" width="5.5" height="3" viewBox="0 0 5.5 3"><path d="M0 0H5.5L2.75 3Z" fill="#000"/></svg>
<div class="a" style="left:831.00px;top:56.60px;width:10.00px;height:25.40px;background:linear-gradient(#dcdfea,#c2c4cc 45%,#8f8f90);"></div>
<svg class="a" style="left:833.25px;top:75.00px" width="5.5" height="3" viewBox="0 0 5.5 3"><path d="M0 0H5.5L2.75 3Z" fill="#000"/></svg>
<div class="a" style="left:2.40px;top:92.40px;width:130.20px;height:22.60px;box-sizing:border-box;background:#fff;border:1px solid #c6c6c6;border-top-color:#b4b4b4;"></div>
<div class="a" style="left:114.10px;top:94.40px;width:17.00px;height:18.60px;box-sizing:border-box;border:1px solid #8c8f96;border-radius:1px;background:linear-gradient(#f3f3f3,#e6e6e6 50%,#d2d2d2);box-shadow:inset 0 0 0 1px rgba(255,255,255,.7);"></div>
<svg class="a" style="left:119.10px;top:102.00px" width="7" height="4" viewBox="0 0 7 4"><path d="M0 0H7L3.5 4Z" fill="#000"/></svg>
<div class="t" style="top:96.41px;font-size:11.8px;line-height:15px;color:#1a1a1a;left:6.60px;">B11</div>
<svg class="a" style="left:145.00px;top:95.00px" width="17.00" height="17.00" viewBox="0 0 17 17"><text x="1.500" y="14" font-size="18" font-style="italic" font-weight="bold" fill="#3a4656" stroke="#3a4656" stroke-width=".3" font-family="Liberation Serif, serif">f</text><text x="9.200" y="15.400" font-size="11.500" font-weight="bold" fill="#3a4656" stroke="#3a4656" stroke-width=".3" font-family="Liberation Sans, sans-serif">x</text><g fill="#f4c430"><path d="M2.500 1l.7 1.500 1.500.7-1.500.7-.7 1.500-.7-1.500-1.500-.7 1.500-.7z"/><path d="M8.500 0l.6 1.200 1.200.6-1.200.6-.6 1.200-.6-1.200-1.200-.6 1.200-.6z"/><path d="M14 2.500l.7 1.400 1.400.7-1.400.7-.7 1.400-.7-1.400-1.400-.7 1.400-.7z"/><path d="M15.500 8.500l.5 1 1 .5-1 .5-.5 1-.5-1-1-.5 1-.5z"/></g></svg>
<svg class="a" style="left:172.00px;top:97.00px" width="14.50" height="14.50" viewBox="0 0 14.5 14.5"><path d="M1 1h12.500v3.600h-2.200v-1.200h-5.300l4 3.900-4 3.800h5.300v-1.200h2.200v3.600h-12.500v-2.200l4.400-4-4.400-4.100z" fill="#5fa8ea" stroke="#1f5a9e" stroke-width="1" stroke-linejoin="round"/></svg>
<div class="a" style="left:201.00px;top:101.00px;width:11.00px;height:1.80px;background:#4d5969;"></div>
<div class="a" style="left:201.00px;top:104.20px;width:11.00px;height:1.80px;background:#4d5969;"></div>
<div class="a" style="left:227.50px;top:92.50px;width:968.50px;height:22.50px;box-sizing:border-box;background:#fff;border-left:1.8px solid #747474;border-top:1.6px solid #747474;border-bottom:1px solid #dcdcdc;"></div>
<div class="a" style="left:0.00px;top:120.00px;width:1196.00px;height:489.00px;background:#fff;"></div>
<div class="a" style="left:0.00px;top:120.00px;width:1186.30px;height:19.80px;background:linear-gradient(#f5f5f5,#e8e8e8);"></div>
<div class="a" style="left:0.00px;top:139.80px;width:31.50px;height:469.20px;background:linear-gradient(90deg,#f2f2f2,#e9e9e9);"></div>
<div class="a" style="left:119.20px;top:298.40px;width:490.00px;height:18.47px;box-sizing:border-box;background:#cfe3f8;border:1px solid #86b7ea;"></div>
<div class="a" style="left:206.50px;top:351.50px;width:402.70px;height:18.67px;box-sizing:border-box;background:#cfe3f8;border:1px solid #86b7ea;"></div>
<div class="a" style="left:206.50px;top:369.17px;width:402.70px;height:18.67px;box-sizing:border-box;background:#cfe3f8;border:1px solid #86b7ea;"></div>
<div class="a" style="left:206.50px;top:422.17px;width:402.70px;height:18.67px;box-sizing:border-box;background:#cfe3f8;border:1px solid #86b7ea;"></div>
<div class="a" style="left:206.50px;top:439.84px;width:402.70px;height:18.67px;box-sizing:border-box;background:#cfe3f8;border:1px solid #86b7ea;"></div>
<div class="a" style="left:206.50px;top:475.17px;width:402.70px;height:18.67px;box-sizing:border-box;background:#cfe3f8;border:1px solid #86b7ea;"></div>
<div class="a" style="left:206.50px;top:528.17px;width:402.70px;height:18.67px;box-sizing:border-box;background:#cfe3f8;border:1px solid #86b7ea;"></div>
<div class="a" style="left:206.50px;top:545.84px;width:402.70px;height:18.67px;box-sizing:border-box;background:#cfe3f8;border:1px solid #86b7ea;"></div>
<div class="a" style="left:206.50px;top:563.51px;width:402.70px;height:18.67px;box-sizing:border-box;background:#cfe3f8;border:1px solid #86b7ea;"></div>
<svg class="a" style="left:0;top:0" width="1200" height="609" fill="none" stroke-width="1.1"><path d="M31.5 157.67H1186.3" stroke="#cacaca"/><path d="M0 157.67H31.5" stroke="#9c9c9c" stroke-width="1.3"/><path d="M31.5 175.33H1186.3" stroke="#cacaca"/><path d="M0 175.33H31.5" stroke="#9c9c9c" stroke-width="1.3"/><path d="M31.5 193.00H1186.3" stroke="#cacaca"/><path d="M0 193.00H31.5" stroke="#9c9c9c" stroke-width="1.3"/><path d="M31.5 210.67H1186.3" stroke="#cacaca"/><path d="M0 210.67H31.5" stroke="#9c9c9c" stroke-width="1.3"/><path d="M31.5 228.34H1186.3" stroke="#cacaca"/><path d="M0 228.34H31.5" stroke="#9c9c9c" stroke-width="1.3"/><path d="M31.5 246.00H1186.3" stroke="#cacaca"/><path d="M0 246.00H31.5" stroke="#9c9c9c" stroke-width="1.3"/><path d="M31.5 263.67H1186.3" stroke="#cacaca"/><path d="M0 263.67H31.5" stroke="#9c9c9c" stroke-width="1.3"/><path d="M31.5 281.34H1186.3" stroke="#cacaca"/><path d="M0 281.34H31.5" stroke="#9c9c9c" stroke-width="1.3"/><path d="M31.5 299.00H1186.3" stroke="#cacaca"/><path d="M0 299.00H31.5" stroke="#9c9c9c" stroke-width="1.3"/><path d="M31.5 316.67H1186.3" stroke="#cacaca"/><path d="M0 316.67H31.5" stroke="#9c9c9c" stroke-width="1.3"/><path d="M31.5 334.34H1186.3" stroke="#cacaca"/><path d="M0 334.34H31.5" stroke="#9c9c9c" stroke-width="1.3"/><path d="M31.5 352.00H1186.3" stroke="#cacaca"/><path d="M0 352.00H31.5" stroke="#9c9c9c" stroke-width="1.3"/><path d="M31.5 369.67H1186.3" stroke="#cacaca"/><path d="M0 369.67H31.5" stroke="#9c9c9c" stroke-width="1.3"/><path d="M31.5 387.34H1186.3" stroke="#cacaca"/><path d="M0 387.34H31.5" stroke="#9c9c9c" stroke-width="1.3"/><path d="M31.5 405.00H1186.3" stroke="#cacaca"/><path d="M0 405.00H31.5" stroke="#9c9c9c" stroke-width="1.3"/><path d="M31.5 422.67H1186.3" stroke="#cacaca"/><path d="M0 422.67H31.5" stroke="#9c9c9c" stroke-width="1.3"/><path d="M31.5 440.34H1186.3" stroke="#cacaca"/><path d="M0 440.34H31.5" stroke="#9c9c9c" stroke-width="1.3"/><path d="M31.5 458.01H1186.3" stroke="#cacaca"/><path d="M0 458.01H31.5" stroke="#9c9c9c" stroke-width="1.3"/><path d="M31.5 475.67H1186.3" stroke="#cacaca"/><path d="M0 475.67H31.5" stroke="#9c9c9c" stroke-width="1.3"/><path d="M31.5 493.34H1186.3" stroke="#cacaca"/><path d="M0 493.34H31.5" stroke="#9c9c9c" stroke-width="1.3"/><path d="M31.5 511.01H1186.3" stroke="#cacaca"/><path d="M0 511.01H31.5" stroke="#9c9c9c" stroke-width="1.3"/><path d="M31.5 528.67H1186.3" stroke="#cacaca"/><path d="M0 528.67H31.5" stroke="#9c9c9c" stroke-width="1.3"/><path d="M31.5 546.34H1186.3" stroke="#cacaca"/><path d="M0 546.34H31.5" stroke="#9c9c9c" stroke-width="1.3"/><path d="M31.5 564.01H1186.3" stroke="#cacaca"/><path d="M0 564.01H31.5" stroke="#9c9c9c" stroke-width="1.3"/><path d="M31.5 581.68H1186.3" stroke="#cacaca"/><path d="M0 581.68H31.5" stroke="#9c9c9c" stroke-width="1.3"/><path d="M31.5 599.34H1186.3" stroke="#cacaca"/><path d="M0 599.34H31.5" stroke="#9c9c9c" stroke-width="1.3"/><path d="M31.5 617.01H1186.3" stroke="#cacaca"/><path d="M0 617.01H31.5" stroke="#9c9c9c" stroke-width="1.3"/><path d="M119.2 139.8V609" stroke="#cacaca"/><path d="M119.2 121V139.8" stroke="#8c8c8c" stroke-width="1.4"/><path d="M206.5 139.8V609" stroke="#cacaca"/><path d="M206.5 121V139.8" stroke="#8c8c8c" stroke-width="1.4"/><path d="M608.6 139.8V609" stroke="#cacaca"/><path d="M608.6 121V139.8" stroke="#8c8c8c" stroke-width="1.4"/><path d="M696.4 139.8V609" stroke="#cacaca"/><path d="M696.4 121V139.8" stroke="#8c8c8c" stroke-width="1.4"/><path d="M783.6 139.8V609" stroke="#cacaca"/><path d="M783.6 121V139.8" stroke="#8c8c8c" stroke-width="1.4"/><path d="M870.9 139.8V609" stroke="#cacaca"/><path d="M870.9 121V139.8" stroke="#8c8c8c" stroke-width="1.4"/><path d="M958.1 139.8V609" stroke="#cacaca"/><path d="M958.1 121V139.8" stroke="#8c8c8c" stroke-width="1.4"/><path d="M1045.4 139.8V609" stroke="#cacaca"/><path d="M1045.4 121V139.8" stroke="#8c8c8c" stroke-width="1.4"/><path d="M1132.7 139.8V609" stroke="#cacaca"/><path d="M1132.7 121V139.8" stroke="#8c8c8c" stroke-width="1.4"/><path d="M31.5 121V609" stroke="#8c8c8c" stroke-width="1.4"/><path d="M0 139.8H1186.3" stroke="#8c8c8c" stroke-width="1.4"/><path d="M0 120.3H1196" stroke="#7f7f7f" stroke-width="1.6"/></svg>
<div class="a" style="left:119.20px;top:298.50px;width:490.00px;height:18.67px;box-sizing:border-box;border:1px solid #86b7ea;"></div>
<div class="a" style="left:206.50px;top:351.50px;width:402.70px;height:18.67px;box-sizing:border-box;border:1px solid #86b7ea;"></div>
<div class="a" style="left:206.50px;top:369.17px;width:402.70px;height:18.67px;box-sizing:border-box;border:1px solid #86b7ea;"></div>
<div class="a" style="left:206.50px;top:422.17px;width:402.70px;height:18.67px;box-sizing:border-box;border:1px solid #86b7ea;"></div>
<div class="a" style="left:206.50px;top:439.84px;width:402.70px;height:18.67px;box-sizing:border-box;border:1px solid #86b7ea;"></div>
<div class="a" style="left:206.50px;top:475.17px;width:402.70px;height:18.67px;box-sizing:border-box;border:1px solid #86b7ea;"></div>
<div class="a" style="left:206.50px;top:528.17px;width:402.70px;height:18.67px;box-sizing:border-box;border:1px solid #86b7ea;"></div>
<div class="a" style="left:206.50px;top:545.84px;width:402.70px;height:18.67px;box-sizing:border-box;border:1px solid #86b7ea;"></div>
<div class="a" style="left:206.50px;top:563.51px;width:402.70px;height:18.67px;box-sizing:border-box;border:1px solid #86b7ea;"></div>
<div class="t" style="top:123.68px;font-size:11.6px;line-height:15px;color:#222;left:-74.70px;width:300px;text-align:center;-webkit-text-stroke:.4px #222;">A</div>
<div class="t" style="top:123.68px;font-size:11.6px;line-height:15px;color:#222;left:13.50px;width:300px;text-align:center;-webkit-text-stroke:.4px #222;">B</div>
<div class="t" style="top:123.68px;font-size:11.6px;line-height:15px;color:#222;left:257.70px;width:300px;text-align:center;-webkit-text-stroke:.4px #222;">C</div>
<div class="t" style="top:123.68px;font-size:11.6px;line-height:15px;color:#222;left:502.50px;width:300px;text-align:center;-webkit-text-stroke:.4px #222;">D</div>
<div class="t" style="top:142.65px;font-size:11.4px;line-height:15px;color:#222;left:-135.80px;width:300px;text-align:center;-webkit-text-stroke:.45px #222;">1</div>
<div class="t" style="top:160.32px;font-size:11.4px;line-height:15px;color:#222;left:-135.80px;width:300px;text-align:center;-webkit-text-stroke:.45px #222;">2</div>
<div class="t" style="top:177.98px;font-size:11.4px;line-height:15px;color:#222;left:-135.80px;width:300px;text-align:center;-webkit-text-stroke:.45px #222;">3</div>
<div class="t" style="top:195.65px;font-size:11.4px;line-height:15px;color:#222;left:-135.80px;width:300px;text-align:center;-webkit-text-stroke:.45px #222;">4</div>
<div class="t" style="top:213.32px;font-size:11.4px;line-height:15px;color:#222;left:-135.80px;width:300px;text-align:center;-webkit-text-stroke:.45px #222;">5</div>
<div class="t" style="top:230.98px;font-size:11.4px;line-height:15px;color:#222;left:-135.80px;width:300px;text-align:center;-webkit-text-stroke:.45px #222;">6</div>
<div class="t" style="top:248.65px;font-size:11.4px;line-height:15px;color:#222;left:-135.80px;width:300px;text-align:center;-webkit-text-stroke:.45px #222;">7</div>
<div class="t" style="top:266.32px;font-size:11.4px;line-height:15px;color:#222;left:-135.80px;width:300px;text-align:center;-webkit-text-stroke:.45px #222;">8</div>
<div class="t" style="top:283.99px;font-size:11.4px;line-height:15px;color:#222;left:-135.80px;width:300px;text-align:center;-webkit-text-stroke:.45px #222;">9</div>
<div class="t" style="top:301.65px;font-size:11.4px;line-height:15px;color:#222;left:-135.80px;width:300px;text-align:center;-webkit-text-stroke:.45px #222;">10</div>
<div class="t" style="top:319.32px;font-size:11.4px;line-height:15px;color:#222;left:-135.80px;width:300px;text-align:center;-webkit-text-stroke:.45px #222;">11</div>
<div class="t" style="top:336.99px;font-size:11.4px;line-height:15px;color:#222;left:-135.80px;width:300px;text-align:center;-webkit-text-stroke:.45px #222;">12</div>
<div class="t" style="top:354.65px;font-size:11.4px;line-height:15px;color:#222;left:-135.80px;width:300px;text-align:center;-webkit-text-stroke:.45px #222;">13</div>
<div class="t" style="top:372.32px;font-size:11.4px;line-height:15px;color:#222;left:-135.80px;width:300px;text-align:center;-webkit-text-stroke:.45px #222;">14</div>
<div class="t" style="top:389.99px;font-size:11.4px;line-height:15px;color:#222;left:-135.80px;width:300px;text-align:center;-webkit-text-stroke:.45px #222;">15</div>
<div class="t" style="top:407.65px;font-size:11.4px;line-height:15px;color:#222;left:-135.80px;width:300px;text-align:center;-webkit-text-stroke:.45px #222;">16</div>
<div class="t" style="top:425.32px;font-size:11.4px;line-height:15px;color:#222;left:-135.80px;width:300px;text-align:center;-webkit-text-stroke:.45px #222;">17</div>
<div class="t" style="top:442.99px;font-size:11.4px;line-height:15px;color:#222;left:-135.80px;width:300px;text-align:center;-webkit-text-stroke:.45px #222;">18</div>
<div class="t" style="top:460.66px;font-size:11.4px;line-height:15px;color:#222;left:-135.80px;width:300px;text-align:center;-webkit-text-stroke:.45px #222;">19</div>
<div class="t" style="top:478.32px;font-size:11.4px;line-height:15px;color:#222;left:-135.80px;width:300px;text-align:center;-webkit-text-stroke:.45px #222;">20</div>
<div class="t" style="top:495.99px;font-size:11.4px;line-height:15px;color:#222;left:-135.80px;width:300px;text-align:center;-webkit-text-stroke:.45px #222;">21</div>
<div class="t" style="top:513.66px;font-size:11.4px;line-height:15px;color:#222;left:-135.80px;width:300px;text-align:center;-webkit-text-stroke:.45px #222;">22</div>
<div class="t" style="top:531.32px;font-size:11.4px;line-height:15px;color:#222;left:-135.80px;width:300px;text-align:center;-webkit-text-stroke:.45px #222;">23</div>
<div class="t" style="top:548.99px;font-size:11.4px;line-height:15px;color:#222;left:-135.80px;width:300px;text-align:center;-webkit-text-stroke:.45px #222;">24</div>
<div class="t" style="top:566.66px;font-size:11.4px;line-height:15px;color:#222;left:-135.80px;width:300px;text-align:center;-webkit-text-stroke:.45px #222;">25</div>
<div class="t" style="top:584.32px;font-size:11.4px;line-height:15px;color:#222;left:-135.80px;width:300px;text-align:center;-webkit-text-stroke:.45px #222;">26</div>
<div class="t" style="top:601.99px;font-size:11.4px;line-height:15px;color:#222;left:-135.80px;width:300px;text-align:center;-webkit-text-stroke:.45px #222;">27</div>
<div class="t" style="top:227.73px;font-size:14.72px;line-height:19px;color:#000;font-weight:bold;left:208.40px;">Статистика по словам</div>
<div class="t" style="top:227.67px;font-size:14.9px;line-height:19px;color:#000;font-weight:bold;left:611.00px;">Показов в месяц</div>
<div class="t" style="top:245.32px;font-size:14.96px;line-height:19px;color:#141414;left:208.20px;">чистка компьютера</div>
<div class="t" style="top:245.32px;font-size:14.96px;line-height:19px;color:#141414;right:505.50px;">389</div>
<div class="t" style="top:262.99px;font-size:14.96px;line-height:19px;color:#141414;left:208.20px;">программы +для чистки компьютера</div>
<div class="t" style="top:262.99px;font-size:14.96px;line-height:19px;color:#141414;right:505.50px;">157</div>
<div class="t" style="top:280.65px;font-size:14.96px;line-height:19px;color:#141414;left:208.20px;">бесплатная чистка компьютера</div>
<div class="t" style="top:280.65px;font-size:14.96px;line-height:19px;color:#141414;right:505.50px;">108</div>
<div class="t" style="top:298.32px;font-size:14.96px;line-height:19px;color:#3a4e6e;left:208.20px;">скачать чистка компьютера</div>
<div class="t" style="top:298.32px;font-size:14.96px;line-height:19px;color:#141414;right:505.50px;">101</div>
<div class="t" style="top:315.99px;font-size:14.96px;line-height:19px;color:#141414;left:208.20px;">чистка компьютера +от мусора</div>
<div class="t" style="top:315.99px;font-size:14.96px;line-height:19px;color:#141414;right:505.50px;">79</div>
<div class="t" style="top:333.65px;font-size:14.96px;line-height:19px;color:#141414;left:208.20px;">чистка компьютера бесплатно +на русском</div>
<div class="t" style="top:333.65px;font-size:14.96px;line-height:19px;color:#141414;right:505.50px;">67</div>
<div class="t" style="top:351.32px;font-size:14.96px;line-height:19px;color:#3a4e6e;left:208.20px;">скачать чистку компьютера бесплатно +на русском</div>
<div class="t" style="top:351.32px;font-size:14.96px;line-height:19px;color:#141414;right:505.50px;">57</div>
<div class="t" style="top:368.99px;font-size:14.96px;line-height:19px;color:#3a4e6e;left:208.20px;">скачать чистку +для компьютера бесплатно</div>
<div class="t" style="top:368.99px;font-size:14.96px;line-height:19px;color:#141414;right:505.50px;">54</div>
<div class="t" style="top:386.65px;font-size:14.96px;line-height:19px;color:#141414;left:208.20px;">чистка компьютера +от мусора бесплатно</div>
<div class="t" style="top:386.65px;font-size:14.96px;line-height:19px;color:#141414;right:505.50px;">53</div>
<div class="t" style="top:404.32px;font-size:14.96px;line-height:19px;color:#141414;left:208.20px;">бесплатные программы +для чистки компьютера</div>
<div class="t" style="top:404.32px;font-size:14.96px;line-height:19px;color:#141414;right:505.50px;">51</div>
<div class="t" style="top:421.99px;font-size:14.96px;line-height:19px;color:#3a4e6e;left:208.20px;">скачать программу +для чистки компьютера</div>
<div class="t" style="top:421.99px;font-size:14.96px;line-height:19px;color:#141414;right:505.50px;">46</div>
<div class="t" style="top:439.66px;font-size:14.96px;line-height:19px;color:#3a4e6e;left:208.20px;">чистка компьютера +от мусора скачать</div>
<div class="t" style="top:439.66px;font-size:14.96px;line-height:19px;color:#141414;right:505.50px;">45</div>
<div class="t" style="top:457.32px;font-size:14.96px;line-height:19px;color:#141414;left:208.20px;">чистка компьютера +от мусора +на русском</div>
<div class="t" style="top:457.32px;font-size:14.96px;line-height:19px;color:#141414;right:505.50px;">43</div>
<div class="t" style="top:474.99px;font-size:14.96px;line-height:19px;color:#3a4e6e;left:208.20px;">чистка компьютера +от мусора скачать бесплатно</div>
<div class="t" style="top:474.99px;font-size:14.96px;line-height:19px;color:#141414;right:505.50px;">42</div>
<div class="t" style="top:492.66px;font-size:14.96px;line-height:19px;color:#141414;left:208.20px;">бесплатная программа чистки компьютера +на русском</div>
<div class="t" style="top:492.66px;font-size:14.96px;line-height:19px;color:#141414;right:505.50px;">40</div>
<div class="t" style="top:510.32px;font-size:14.96px;line-height:19px;color:#141414;left:208.20px;">программа +для чистки компьютера +от мусора</div>
<div class="t" style="top:510.32px;font-size:14.96px;line-height:19px;color:#141414;right:505.50px;">39</div>
<div class="t" style="top:527.99px;font-size:14.96px;line-height:19px;color:#3a4e6e;left:208.20px;">программа +для чистки компьютера скачать бесплатно</div>
<div class="t" style="top:527.99px;font-size:14.96px;line-height:19px;color:#141414;right:505.50px;">34</div>
<div class="t" style="top:545.66px;font-size:14.96px;line-height:19px;color:#3a4e6e;left:208.20px;">чистка компьютера программа +на русском скачать</div>
<div class="t" style="top:545.66px;font-size:14.96px;line-height:19px;color:#141414;right:505.50px;">31</div>
<div class="a" style="left:208.00px;top:564.01px;width:396.50px;height:17.67px;overflow:hidden;"><div class="t" style="left:1px;top:-0.68px;font-size:14.96px;line-height:19px;color:#3a4e6e">скачать программу чистка компьютера бесплатно +на русском</div></div>
<svg class="a" style="left:604.3px;top:569.51px" width="4" height="7"><path d="M0 0L4 3.5L0 7Z" fill="#5a1c2c"/></svg>
<div class="t" style="top:563.32px;font-size:14.96px;line-height:19px;color:#141414;right:505.50px;">30</div>
<div class="t" style="top:580.99px;font-size:14.96px;line-height:19px;color:#141414;left:208.20px;">утилиты +для чистки компьютера</div>
<div class="t" style="top:580.99px;font-size:14.96px;line-height:19px;color:#141414;right:505.50px;">29</div>
<div class="t" style="top:598.66px;font-size:14.96px;line-height:19px;color:#141414;left:208.20px;">программы чистка компьютера +от мусора бесплатно</div>
<div class="t" style="top:598.66px;font-size:14.96px;line-height:19px;color:#141414;right:505.50px;">26</div>
<div class="t" style="top:298.32px;font-size:14.96px;line-height:19px;color:#3a4e6e;left:121.00px;">скачать</div>
<div class="a" style="left:117.50px;top:314.87px;width:90.90px;height:21.07px;box-sizing:border-box;border:3.2px solid #000;"></div>
<div class="a" style="left:191.10px;top:246.40px;width:2.90px;height:339.10px;background:#dc1616;border-radius:1.4px;"></div>
<div class="a" style="left:1186.30px;top:120.00px;width:9.70px;height:489.00px;background:#f7f7f7;"></div>
<div class="a" style="left:1188.50px;top:144.00px;width:7.50px;height:186.00px;background:linear-gradient(90deg,#e9e9e9,#f2f2f2);border:1px solid #d6d6d6;box-sizing:border-box;"></div>
<div class="a" style="left:1186.50px;top:330.00px;width:9.50px;height:279.00px;background:#ededed;"></div>
<div class="a" style="left:1186.00px;top:120.50px;width:10.00px;height:4.10px;background:#0a0a0a;"></div>
<svg class="a" style="left:1192.5px;top:132.5px" width="4" height="3"><path d="M0 3L3.5 0V3Z" fill="#555"/></svg>
<div class="a" style="left:1191.00px;top:228.50px;width:4.20px;height:1.20px;background:#3c3c3c;"></div>
<div class="a" style="left:1191.00px;top:230.90px;width:4.20px;height:1.20px;background:#3c3c3c;"></div>
<div class="a" style="left:1191.00px;top:233.30px;width:4.20px;height:1.20px;background:#3c3c3c;"></div>
<svg class="a" style="left:1000px;top:560px" width="200" height="49"><g transform="translate(12.5 38.2) scale(1.06 1)"><text x="0" y="0" font-family="Liberation Sans, sans-serif" font-size="26.8" textLength="155.6" lengthAdjust="spacing" stroke-linejoin="round" fill="#858585" stroke="#858585" stroke-width="2.7">webdeco.ru</text><text x="0" y="0" font-family="Liberation Sans, sans-serif" font-size="26.8" textLength="155.6" lengthAdjust="spacing" stroke-linejoin="round" fill="#fff" stroke="#fff" stroke-width="0.6">webdeco.ru</text></g></svg>
<div class="a" style="left:734.30px;top:102.30px;width:451.30px;height:340.30px;box-sizing:border-box;border:1px solid #2f3236;border-radius:7px;background:linear-gradient(#dbe8f9,#c6dcf6 12px,#bbd5f3 26px,#c3dbf5 60px,#c9dff7);box-shadow:0 0 7px 1px rgba(0,0,0,.5),1px 2px 5px rgba(0,0,0,.45), inset 0 0 0 1px rgba(255,255,255,.65);"></div>
<div class="a" style="left:735.80px;top:103.80px;width:448.30px;height:27.80px;overflow:hidden;border-radius:6px 6px 0 0;"><div class="a" style="left:0;top:17.5px;width:460px;height:20px;background:linear-gradient(90deg,rgba(120,150,190,.2),rgba(120,150,190,.16) 70%,rgba(120,150,190,.04));filter:blur(1.5px)"></div><div class="a" style="left:0;top:17px;width:460px;height:2.4px;background:rgba(90,110,140,.35);filter:blur(1.2px)"></div><div class="a" style="left:47.8px;top:19px;width:3px;height:14px;background:rgba(80,100,130,.45);filter:blur(1.3px)"></div><div class="a" style="left:135.1px;top:19px;width:3px;height:14px;background:rgba(80,100,130,.45);filter:blur(1.3px)"></div><div class="a" style="left:222.3px;top:19px;width:3px;height:14px;background:rgba(80,100,130,.45);filter:blur(1.3px)"></div><div class="a" style="left:309.6px;top:19px;width:3px;height:14px;background:rgba(80,100,130,.45);filter:blur(1.3px)"></div><div class="a" style="left:396.9px;top:19px;width:3px;height:14px;background:rgba(80,100,130,.45);filter:blur(1.3px)"></div><div class="a" style="left:89.4px;top:22.5px;width:7px;height:6px;background:rgba(60,80,110,.4);filter:blur(1.6px)"></div><div class="a" style="left:176.7px;top:22.5px;width:7px;height:6px;background:rgba(60,80,110,.4);filter:blur(1.6px)"></div><div class="a" style="left:263.9px;top:22.5px;width:7px;height:6px;background:rgba(60,80,110,.4);filter:blur(1.6px)"></div><div class="a" style="left:351.2px;top:22.5px;width:7px;height:6px;background:rgba(60,80,110,.4);filter:blur(1.6px)"></div></div>
<div class="a" style="left:741.60px;top:131.60px;width:437.40px;height:304.90px;box-sizing:border-box;background:#f0f0f0;border:1px solid #7e8da3;box-shadow:0 0 0 1px rgba(255,255,255,.6);"></div>
<div class="t" style="top:110.81px;font-size:12.1px;line-height:16px;color:#0a0a0a;left:743.00px;text-shadow:0 0 6px #fff,0 0 4px #fff;">Найти и заменить</div>
<div class="a" style="left:1128.00px;top:102.60px;width:50.50px;height:20.40px;box-sizing:border-box;border:1px solid #7e4034;border-top:none;border-radius:0 0 4.5px 4.5px;background:linear-gradient(#e9ada0,#dc8373 45%,#cf4530 50%,#c9402c 80%,#d8664f);box-shadow:inset 0 0 0 1px rgba(255,255,255,.35);"></div>
<svg class="a" style="left:1145px;top:106px" width="17" height="14" viewBox="0 0 17 14"><path d="M2.2 1.6h3.3l3 3.4 3-3.4h3.3L10.3 7l4.7 5.4h-3.5L8.5 8.9l-3 3.5H2L6.7 7z" fill="#fff" stroke="#5a3a3a" stroke-width="1" stroke-linejoin="round"/></svg>
<div class="t" style="top:147.21px;font-size:12.1px;line-height:16px;color:#111;left:755.60px;"><u>Н</u>айти</div>
<div class="a" style="left:755.20px;top:168.70px;width:287.80px;height:23.60px;box-sizing:border-box;background:#fff;border:1px solid #b9bbc0;border-top-color:#a2a4a9;"></div>
<div class="a" style="left:1024.50px;top:170.90px;width:16.50px;height:19.40px;box-sizing:border-box;border:1px solid #8a8a8a;border-radius:1.5px;background:linear-gradient(#f2f2f2,#e8e8e8 50%,#d4d4d4);box-shadow:inset 0 0 0 1px rgba(255,255,255,.7);"></div>
<svg class="a" style="left:1029.25px;top:178.80px" width="7" height="4" viewBox="0 0 7 4"><path d="M0 0H7L3.5 4Z" fill="#000"/></svg>
<div class="t" style="top:172.97px;font-size:12.2px;line-height:16px;color:#111;left:759.60px;">скачать</div>
<div class="a" style="left:757.40px;top:195.00px;width:46.60px;height:3.00px;background:#e0141c;border-radius:1.5px;"></div>
<div class="a" style="left:1057.00px;top:152.20px;width:107.00px;height:24.60px;box-sizing:border-box;border:1px solid #707070;border-radius:3.5px;background:linear-gradient(#f4f4f4,#ececec 48%,#dedede 52%,#d0d0d0);box-shadow:inset 0 0 0 1px rgba(255,255,255,.85);"></div>
<div class="t" style="top:156.51px;font-size:12.1px;line-height:16px;color:#111;left:960.50px;width:300px;text-align:center;">На<u>й</u>ти</div>
<div class="a" style="left:1057.00px;top:185.30px;width:107.00px;height:24.50px;box-sizing:border-box;border:1px solid #3c7fb1;border-radius:3.5px;background:linear-gradient(#eaf6fd,#d9f0fc 48%,#bee6fd 52%,#a7d9f5);box-shadow:inset 0 0 0 1px rgba(255,255,255,.7);"></div>
<div class="t" style="top:190.11px;font-size:12.1px;line-height:16px;color:#111;left:960.50px;width:300px;text-align:center;">Найти <u>в</u>се</div>
<div class="a" style="left:1080.50px;top:187.60px;width:60.70px;height:18.80px;box-sizing:border-box;border:1px dotted #222;"></div>
<div class="a" style="left:1057.00px;top:226.50px;width:115.00px;height:1.00px;background:#d0d0d0;"></div>
<div class="a" style="left:1057.00px;top:227.50px;width:115.00px;height:0.80px;background:#fafafa;"></div>
<div class="t" style="top:238.39px;font-size:12.15px;line-height:16px;color:#111;left:755.30px;">Заменит<u>ь</u> на</div>
<div class="a" style="left:755.20px;top:260.30px;width:287.80px;height:23.70px;box-sizing:border-box;background:#fff;border:1px solid #b9bbc0;border-top-color:#a2a4a9;"></div>
<div class="a" style="left:1024.50px;top:262.50px;width:16.50px;height:19.50px;box-sizing:border-box;border:1px solid #8a8a8a;border-radius:1.5px;background:linear-gradient(#f2f2f2,#e8e8e8 50%,#d4d4d4);box-shadow:inset 0 0 0 1px rgba(255,255,255,.7);"></div>
<svg class="a" style="left:1029.25px;top:270.45px" width="7" height="4" viewBox="0 0 7 4"><path d="M0 0H7L3.5 4Z" fill="#000"/></svg>
<div class="a" style="left:1057.00px;top:243.60px;width:107.00px;height:23.90px;box-sizing:border-box;border:1px solid #707070;border-radius:3.5px;background:linear-gradient(#f4f4f4,#ececec 48%,#dedede 52%,#d0d0d0);box-shadow:inset 0 0 0 1px rgba(255,255,255,.85);"></div>
<div class="t" style="top:247.81px;font-size:12.1px;line-height:16px;color:#111;left:960.50px;width:300px;text-align:center;">За<u>м</u>енить</div>
<div class="a" style="left:1057.00px;top:277.00px;width:107.00px;height:24.30px;box-sizing:border-box;border:1px solid #707070;border-radius:3.5px;background:linear-gradient(#f4f4f4,#ececec 48%,#dedede 52%,#d0d0d0);box-shadow:inset 0 0 0 1px rgba(255,255,255,.85);"></div>
<div class="t" style="top:280.81px;font-size:12.1px;line-height:16px;color:#111;left:960.50px;width:300px;text-align:center;">Зам<u>е</u>нить все</div>
<div class="a" style="left:768.00px;top:330.00px;width:13.00px;height:13.00px;box-sizing:border-box;border:1px solid #8e8f8f;background:#f4f4f4;box-shadow:inset 0 0 0 1px #f4f4f4, inset 0 0 0 2px #b5b8bb;"><div style="position:absolute;left:2px;top:2px;width:7px;height:7px;background:linear-gradient(135deg,#cfd0d1,#f6f6f6 70%)"></div></div>
<div class="a" style="left:768.00px;top:356.00px;width:13.00px;height:13.00px;box-sizing:border-box;border:1px solid #8e8f8f;background:#f4f4f4;box-shadow:inset 0 0 0 1px #f4f4f4, inset 0 0 0 2px #b5b8bb;"><div style="position:absolute;left:2px;top:2px;width:7px;height:7px;background:linear-gradient(135deg,#cfd0d1,#f6f6f6 70%)"></div></div>
<div class="t" style="top:327.94px;font-size:12.3px;line-height:16px;color:#111;left:785.40px;"><u>У</u>читывать регистр</div>
<div class="t" style="top:354.85px;font-size:12.55px;line-height:16px;color:#111;left:785.40px;">Ячейку целиком</div>
<div class="a" style="left:742.60px;top:382.40px;width:435.40px;height:0.90px;background:#cfcfcf;"></div>
<div class="a" style="left:742.60px;top:383.30px;width:435.40px;height:0.90px;background:#fbfbfb;"></div>
<div class="a" style="left:755.80px;top:397.40px;width:107.20px;height:24.40px;box-sizing:border-box;border:1px solid #707070;border-radius:3.5px;background:linear-gradient(#f4f4f4,#ececec 48%,#dedede 52%,#d0d0d0);box-shadow:inset 0 0 0 1px rgba(255,255,255,.85);"></div>
<div class="t" style="top:404.51px;font-size:12.1px;line-height:16px;color:#111;left:780.00px;"><u>Д</u>етали</div>
<svg class="a" style="left:827.3px;top:406.6px" width="11" height="12" viewBox="0 0 11 12"><path d="M.3.500h10.400L5.500 5.600zM.3 6.200h10.400L5.500 11.300z" fill="#0c0c0c"/></svg>
<div class="a" style="left:935.20px;top:397.40px;width:106.60px;height:24.40px;box-sizing:border-box;border:1px solid #707070;border-radius:3.5px;background:linear-gradient(#f4f4f4,#ececec 48%,#dedede 52%,#d0d0d0);box-shadow:inset 0 0 0 1px rgba(255,255,255,.85);"></div>
<div class="t" style="top:402.11px;font-size:12.1px;line-height:16px;color:#111;left:838.50px;width:300px;text-align:center;"><u>С</u>правка</div>
<div class="a" style="left:1057.00px;top:397.40px;width:106.80px;height:24.40px;box-sizing:border-box;border:1px solid #707070;border-radius:3.5px;background:linear-gradient(#f4f4f4,#ececec 48%,#dedede 52%,#d0d0d0);box-shadow:inset 0 0 0 1px rgba(255,255,255,.85);"></div>
<div class="t" style="top:402.11px;font-size:12.1px;line-height:16px;color:#111;left:960.40px;width:300px;text-align:center;"><u>З</u>акрыть</div>
<svg class="a" style="left:0;top:0" width="1200" height="609"><path d="M991.84 304.46L1051.24 229.79L1054.78 235.38L1057.70 217.90L1041.32 224.68L1047.56 226.87L988.16 301.54A2.35 2.35 0 0 0 991.84 304.46Z" fill="#e11b22" stroke="#1a0a0a" stroke-width="1.3" stroke-linejoin="round"/></svg>
</div></body></html>
